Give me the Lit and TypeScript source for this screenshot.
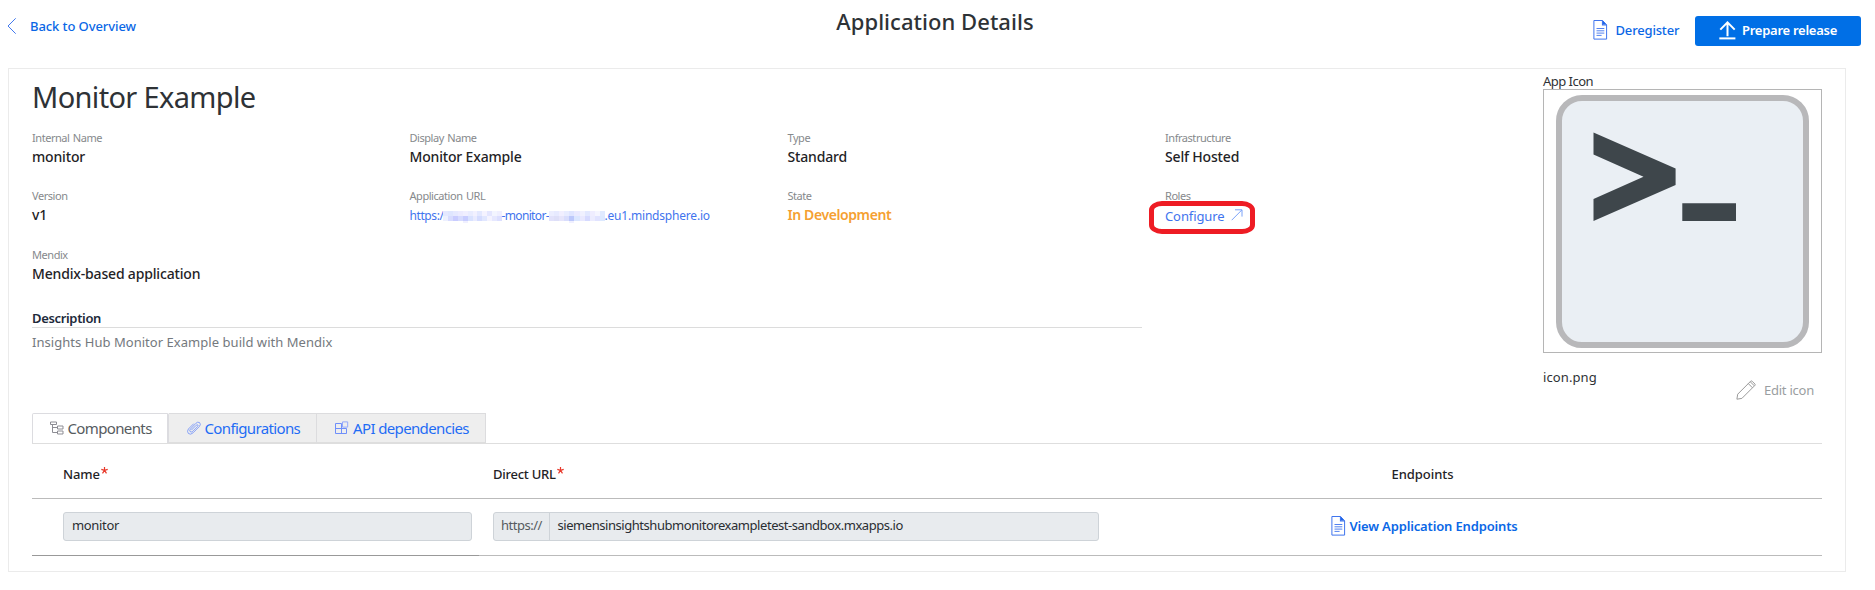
import { LitElement, html, css, svg } from "lit";

const docIcon = html`<svg class="doc" width="15" height="20" viewBox="0 0 15 20" fill="none" stroke="#3f74ee">
  <path d="M.9.5H9.5L13.6 4.8V19.1H.9z"/><path d="M9.5.5V4.8H13.6" stroke-width="1.2"/><path d="M10 1L13 4.3H10z" fill="#1d66e8" stroke="none"/>
  <path d="M3.5 8.5H11.3M3.5 10.8H11.3M3.5 13.1H11.3M3.5 15.4H8.6" stroke-width=".9"/></svg>`;

const URL_MASK_A = ["#e4e8ff", "#dfe6ff", "#e6e9ff", "#ecebff", "#f0efff", "#e9ecff", "#f2f1ff", "#e3e8ff", "#f5f3ff", "#e4e6ff", "#f3f5ff", "#efefff",
  "#edf0ff", "#d8dcff", "#c9ccff", "#d6dbff", "#c8cdff", "#d9e2ff", "#e9ebff", "#d5dcff", "#e1e7ff", "#f4f3ff", "#e6e8ff", "#dcdfff"];
const URL_MASK_B = ["#eceeff", "#e7eaff", "#f1efff", "#e8ecff", "#dfe5ff", "#eaeaff", "#f0f1ff", "#e2e8ff", "#efedff", "#f5f5ff", "#e0eaff",
  "#e2e2fb", "#dedff8", "#e6e5fb", "#d9ddfc", "#bcc8fb", "#dbe6ff", "#e9e9ff", "#d6daff", "#ececff", "#e1e3ff", "#dce9ff"];

const mask = (colors: string[], width: number) => {
  const cols = colors.length / 2;
  const w = width / cols;
  return html`<svg class="mask" width=${width} height="12" viewBox="0 0 ${width} 12" shape-rendering="crispEdges">
    ${colors.map((c, i) => svg`<rect x=${(i % cols) * w} y=${i < cols ? 0 : 5} width=${w + 0.3} height="5" fill=${c}/>`)}
    <rect x=${w * 4} y="10" width="5" height="2" fill="#f0f0ff"/></svg>`;
};

class AppRoot extends LitElement {
  static styles = css`
    :host { display: block; width: 1875px; height: 590px; overflow: hidden; background: #fff; color: #2e3236; font-family: "Noto Sans", sans-serif; font-size: 13px; }
    * { box-sizing: border-box; }
    svg { display: block; flex: none; }
    .header { display: grid; grid-template-columns: 1fr auto 1fr; align-items: start; width: 1869px; height: 68px; }
    .back { display: flex; align-items: center; gap: 13px; height: 52px; padding-left: 7px; color: #0a67e6; font-weight: 500; letter-spacing: -.083px; }
    .title { margin: 0; font-size: 22px; line-height: 43px; font-weight: 500; letter-spacing: .04px; padding-left: 1px; }
    .actions { display: flex; justify-content: flex-end; align-items: center; height: 30px; margin: 16px 8px 0 0; }
    .dereg { display: flex; align-items: center; gap: 8px; width: 101.5px; line-height: 26px; padding-bottom: 2px; margin-right: 1px; color: #0a67e6; font-weight: 500; letter-spacing: -.17px; }
    .prepare { display: flex; align-items: center; gap: 6px; width: 166px; height: 30px; padding: 0 0 2px 24px; border: 0; border-radius: 3px; background: #006fe6; color: #fff; font: 600 13px "Noto Sans", sans-serif; letter-spacing: -.265px; white-space: nowrap; }
    .card { width: 1838px; height: 504px; margin-left: 8px; border: 1px solid #ebebeb; padding: 0 23px; }
    .top { display: flex; height: 344px; }
    .main { width: 1511px; }
    .name { margin: 0 0 4px; font-size: 29px; line-height: 55px; font-weight: 400; letter-spacing: -.65px; }
    .info { display: grid; grid-template-columns: 377.5px 378px 377.5px auto; grid-template-rows: 58px 59px 63.5px; }
    .label { font-size: 11px; line-height: 20px; letter-spacing: -.45px; word-spacing: 1px; color: #86898c; }
    .value { font-size: 14px; line-height: 18px; font-weight: 500; letter-spacing: -.17px; color: #1f2326; }
    .state { color: #f5a031; font-weight: 600; letter-spacing: -.4px; }
    .url { display: flex; align-items: center; font-size: 12px; font-weight: 400; line-height: 20px; white-space: nowrap; color: #3f74ee; letter-spacing: -.2px; }
    .pre { width: 33px; letter-spacing: -.413px; }
    .mid { width: 47px; letter-spacing: -.65px; }
    .mask { margin-top: 1px; }
    .configure { position: relative; display: inline-flex; gap: 6px; font-size: 13px; font-weight: 400; line-height: 21px; letter-spacing: -.1px; color: #3f74ee; }
    .configure .arrow { margin-top: 3px; }
    .highlight { position: absolute; left: -16px; top: -5px; width: 106px; height: 33px; border: 5px solid #ee1c24; border-radius: 13px / 9px; }
    .desc { width: 1110px; line-height: 18px; font-weight: 600; letter-spacing: -.34px; color: #20293a; border-bottom: 1px solid #dcdcdc; }
    .desctext { line-height: 28px; letter-spacing: .04px; color: #74797e; }
    .aside { width: 279px; padding-top: 4px; }
    .applabel { line-height: 16px; letter-spacing: -.52px; }
    .iconbox { display: flex; align-items: center; justify-content: center; width: 279px; height: 264px; border: 1px solid #b5b5b5; }
    .file { line-height: 20px; margin-top: 14px; letter-spacing: .1px; }
    .edit { display: flex; justify-content: flex-end; align-items: center; gap: 8px; margin: -7px 8px 0 0; height: 20px; color: #9a9ea1; letter-spacing: -.238px; }
    .tabs { display: flex; height: 31px; border-bottom: 1px solid #dedede; font-size: 15px; letter-spacing: -.63px; line-height: 28px; white-space: nowrap; }
    .tab { display: flex; align-items: center; height: 30px; border: 1px solid #dcdcde; border-left-width: 0; border-bottom-color: #dedede; background: #eee; color: #1f6cf5; padding: 0 0 1px 17px; }
    .tab.active { width: 137px; background: #fff; color: #565b60; border: 1px solid #dcdce0; border-width: 1px 2px 0 1px; border-radius: 2px 2px 0 0; padding: 0 0 2px 17px; gap: 3.5px; }
    .conf { width: 148px; padding-left: 17.5px; gap: 4px; }
    .api { width: 169px; padding-left: 18px; gap: 4px; }
    .row { display: grid; grid-template-columns: 447px 634px 622px auto; border-bottom: 1px solid #bbb; }
    .head { height: 55px; font-weight: 500; color: #1f2326; line-height: 60px; }
    .head > div { display: flex; }
    .body { height: 57px; position: relative; align-items: start; padding-top: 13px; }
    .body::after { content: ""; position: absolute; left: 0; bottom: -1px; width: 447px; height: 1px; background: #999; }
    .c1 { padding-left: 31px; letter-spacing: -.15px; }
    .c2 { padding-left: 14px; letter-spacing: -.26px; }
    .c3 { justify-content: center; letter-spacing: -.046px; padding-right: 3px; }
    .star { margin: 23px 0 0 1px; }
    .input { display: flex; height: 29px; line-height: 25px; border: 1px solid #ced3d8; border-radius: 3px; background: #e8ebee; color: #2a2e33; }
    .iname { width: 409px; padding-left: 8px; letter-spacing: -.334px; }
    .iurl { width: 606px; letter-spacing: -.45px; }
    .scheme { width: 56px; padding-left: 7px; border-right: 1px solid #ced3d8; color: #565b60; letter-spacing: -.5px; }
    .host { padding-left: 7.5px; }
    .view { display: flex; align-items: center; justify-content: center; gap: 3px; height: 27px; padding-left: 1px; font-weight: 600; color: #0a67e6; letter-spacing: -.15px; }
  `;

  render() {
    const item = (l: string, v: unknown) => html`<div><div class="label">${l}</div>${v}</div>`;
    const val = (t: string) => html`<div class="value">${t}</div>`;
    const star = html`<svg class="star" width="7" height="7" viewBox="0 0 7 7" stroke="#e8392b" stroke-width="1.2"><path d="M3.5 0V3.4M.3 2.4L3.5 3.4 6.7 2.4M1.5 6.4L3.5 3.4 5.5 6.4" fill="none"/></svg>`;
    return html`
      <div class="header">
        <div class="back"><svg width="10" height="16" viewBox="0 0 10 16" fill="none" stroke="#4279ee"><path d="M8.7.3L1 8 8.7 15.7"/></svg>Back to Overview</div>
        <h1 class="title">Application Details</h1>
        <div class="actions">
          <div class="dereg">${docIcon}<span>Deregister</span></div>
          <button class="prepare"><svg width="17" height="19" viewBox="0 0 17 19" fill="none" stroke="#fff" stroke-width="2"><path d="M8.5 15.3V1.7M1.3 8.6L8.5 1.4 15.7 8.6" /><path d="M.3 17.4H16.4"/></svg>Prepare release</button>
        </div>
      </div>
      <div class="card">
        <div class="top">
          <div class="main">
            <h2 class="name">Monitor Example</h2>
            <div class="info">
              ${item("Internal Name", val("monitor"))}
              ${item("Display Name", val("Monitor Example"))}
              ${item("Type", val("Standard"))}
              ${item("Infrastructure", val("Self Hosted"))}
              ${item("Version", val("v1"))}
              ${item("Application URL", html`<div class="value url"><span class="pre">https:/</span>${mask(URL_MASK_A, 59)}<span class="mid">-monitor-</span>${mask(URL_MASK_B, 56)}<span>.eu1.mindsphere.io</span></div>`)}
              ${item("State", html`<div class="value state">In Development</div>`)}
              ${item("Roles", html`<div class="configure">Configure<svg class="arrow" width="12" height="12" viewBox="0 0 12 12" fill="none" stroke="#7ba2f8"><path d="M.7 11.2L10.8 1M4 .8H11V7.6"/></svg><span class="highlight"></span></div>`)}
              ${item("Mendix", val("Mendix-based application"))}
            </div>
            <div class="desc">Description</div>
            <div class="desctext">Insights Hub Monitor Example build with Mendix</div>
          </div>
          <div class="aside">
            <div class="applabel">App Icon</div>
            <div class="iconbox"><svg width="253" height="253" viewBox="0 0 253 253"><rect x="3" y="3" width="247" height="247" rx="23" fill="#eaeff4" stroke="#b8b8ba" stroke-width="6"/><path d="M37.5 37.5L119.6 73.5V90L37.5 126V104L87.5 81.7 37.5 59.5zM126.3 108.3H180V126H126.3z" fill="#3e464b"/></svg></div>
            <div class="file">icon.png</div>
            <div class="edit"><svg width="20" height="20" viewBox="0 0 20 20" fill="none" stroke="#9a9a9a"><path d="M.9 19.2L1.7 14.2 14.7 1.2Q15.4.6 16.1 1.2L18.9 4Q19.5 4.7 18.9 5.4L5.9 18.4zM12.3 3.6L16.5 7.8M14.3 1.8L18.4 5.9"/></svg>Edit icon</div>
          </div>
        </div>
        <div class="tabs">
          <div class="tab active"><svg width="14" height="14" viewBox="0 0 14 14" fill="none" stroke="#8d8d94"><path d="M.5 1H6.5V3.5H.5zM2.5 3.5V11.5H7M2.5 6.5H7M7.5 5H13V8H7.5zM7.5 10H13V13H7.5z"/></svg>Components</div>
          <div class="tab conf"><svg width="14" height="14" viewBox="0 0 14 14" fill="none" stroke="#6f8ffa" stroke-width=".8"><path d="M4.4 9.1L9.3 4.2Q10.3 3.3 10.9 4 11.4 4.7 10.5 5.6L5.8 10.3Q4.2 11.6 3.1 10.6 2.2 9.5 3.4 8.1L8.9 2.3Q10.6.4 12.6 1.6 14.2 3.2 12.5 5.4L6.1 11.8Q3.5 14.2 1.4 12.5-.4 10.4 1.4 8L6.8 2.6"/></svg>Configurations</div>
          <div class="tab api"><svg width="14" height="14" viewBox="0 0 14 14" fill="none" stroke="#6f8ffa"><path d="M6.5 2.5H.5V12.5H11.5V7.5H.5M6.5 2.5V12.5"/><path d="M7.5.9H12.7V6.1H7.5z" stroke="#94a9fb"/></svg>API dependencies</div>
        </div>
        <div class="row head">
          <div class="c1">Name${star}</div>
          <div class="c2">Direct URL${star}</div>
          <div class="c3">Endpoints</div>
        </div>
        <div class="row body">
          <div class="c1"><div class="input iname">monitor</div></div>
          <div class="c2"><div class="input iurl"><span class="scheme">https://</span><span class="host">siemensinsightshubmonitorexampletest-sandbox.mxapps.io</span></div></div>
          <div class="view">${docIcon}<span>View Application Endpoints</span></div>
        </div>
      </div>`;
  }
}
customElements.define("app-root", AppRoot);
